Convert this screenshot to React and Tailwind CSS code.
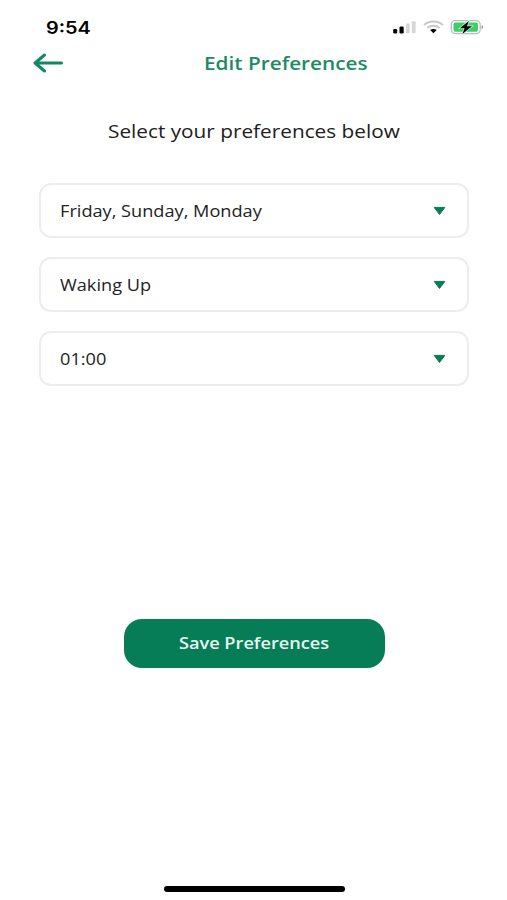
const preferences = ['Friday, Sunday, Monday', 'Waking Up', '01:00'];

function StatusIcons() {
  return (
    <svg width="94" height="18" viewBox="0 0 94 18" className="block">
      <rect x="1.200" y="11" width="4" height="4.400" rx="1.200" fill="#000" />
      <rect x="7.500" y="8.600" width="4.200" height="6.800" rx="1.200" fill="#000" />
      <rect x="13.900" y="5.600" width="3.800" height="9.600" rx="1.100" fill="#d6d6d6" />
      <rect x="19.800" y="3.200" width="3.800" height="12" rx="1.100" fill="#d6d6d6" />
      <g fill="none" stroke="#c8c8c8" strokeWidth="2">
        <path d="M32 6.900C37.200 2.400 45.600 2.400 50.800 6.900" />
        <path d="M35.300 10C38.800 7 44 7 47.500 10" />
      </g>
      <path d="M38.100 12C40 10.600 42.800 10.600 44.700 12L41.400 15.300Z" fill="#000" />
      <rect x="59.300" y="2.700" width="28.900" height="12.900" rx="4" fill="#fff" stroke="#bcbcbc" strokeWidth="1.300" />
      <rect x="61.500" y="4.600" width="24.500" height="9.100" rx="2" fill="#3ccf66" />
      <path d="M89.600 7.300C91.600 7.700 91.600 10.700 89.600 11.100Z" fill="#909090" />
      <path d="M76.800 2.900L67.800 10.200H72.600L70.400 15.900L80 8.200H75Z" fill="#000" stroke="#d7f5df" strokeWidth="1.400" paintOrder="stroke" />
    </svg>
  );
}

function PreferenceField({ label }) {
  return (
    <button className="flex h-[55px] w-full items-center justify-between rounded-[12px] border-2 border-[#ededed] bg-white pr-[21px] pl-[19px] text-left">
      <span className="origin-left scale-x-[1.172] whitespace-nowrap text-[15.500px] leading-6 text-[#222]">{label}</span>
      <svg width="13" height="10" viewBox="0 0 13 10">
        <path d="M1.200 1.400H11.800L6.500 8.500Z" fill="#087c56" stroke="#087c56" strokeWidth="1" strokeLinejoin="round" />
      </svg>
    </button>
  );
}

export default function App() {
  return (
    <main className="flex h-[900px] w-[507px] flex-col overflow-hidden bg-white font-['Open_Sans',sans-serif]">
      <div className="flex h-[46px] shrink-0 items-start justify-between pt-[18px] pr-[21px] pl-[46px]">
        <span className="origin-left scale-x-[1.17] font-['Inter',sans-serif] text-[17px] leading-[20px] font-semibold text-black">9:54</span>
        <StatusIcons />
      </div>
      <header className="flex h-[33px] shrink-0 items-center">
        <svg width="32" height="20" viewBox="0 0 32 20" className="ml-[32px]">
          <path d="M12.500 2L3 10L12.500 18M3 10H29.500" fill="none" stroke="#118a60" strokeWidth="3" strokeLinecap="round" strokeLinejoin="round" />
        </svg>
        <h1 className="ml-[139.500px] origin-left scale-x-[1.187] whitespace-nowrap text-[17.500px] leading-6 font-semibold text-[#1d8b62]">Edit Preferences</h1>
      </header>
      <p className="mt-[39px] ml-[108px] origin-left scale-x-[1.187] self-start whitespace-nowrap text-[17.500px] leading-[26px] text-[#202020]">Select your preferences below</p>
      <section className="mt-[39px] ml-[39px] flex w-[430px] flex-col gap-[19px]">
        {preferences.map((label) => (
          <PreferenceField key={label} label={label} />
        ))}
      </section>
      <button className="mt-[233px] ml-[123.500px] flex h-[48.500px] w-[261px] shrink-0 items-center justify-center rounded-[18px] bg-[#067d57] pb-[1px]">
        <span className="scale-x-[1.173] whitespace-nowrap text-[15.500px] leading-6 font-semibold text-[#e8f7f1]">Save Preferences</span>
      </button>
      <div className="mt-auto mb-[8px] ml-[164px] h-[6px] w-[181px] rounded-full bg-black" />
    </main>
  );
}
